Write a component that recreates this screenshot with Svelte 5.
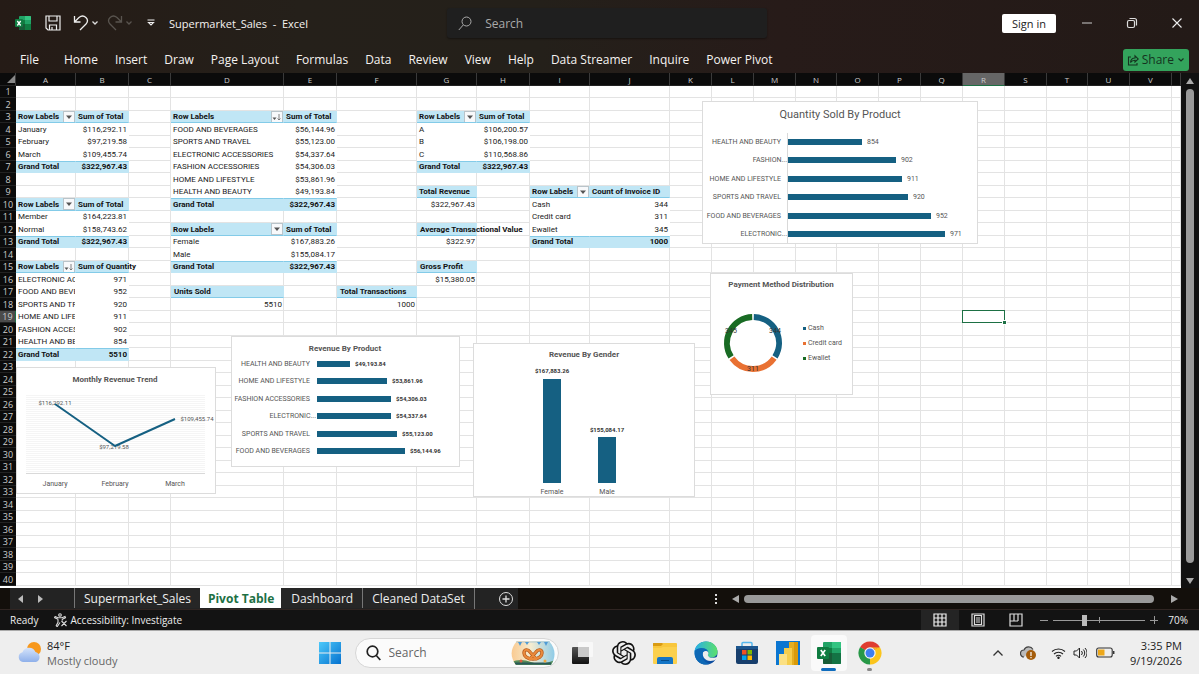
<script>
	const menus = ["File", "Home", "Insert", "Draw", "Page Layout", "Formulas", "Data", "Review", "View", "Help", "Data Streamer", "Inquire", "Power Pivot"];

	const columns = [
		["A", 60], ["B", 53], ["C", 42], ["D", 113], ["E", 53], ["F", 80],
		["G", 60], ["H", 53], ["I", 60], ["J", 80], ["K", 42], ["L", 42],
		["M", 42], ["N", 41], ["O", 42], ["P", 42], ["Q", 42], ["R", 42],
		["S", 42], ["T", 41], ["U", 42], ["V", 42], ["", null],
	];
	const rows = Array.from({ length: 40 }, (_, i) => i + 1);
	const sheets = ["Supermarket_Sales", "Pivot Table", "Dashboard", "Cleaned DataSet"];

	const pivots = [
		{ cols: "AB", row: 3, head: "Sum of Total", data: [["January", "$116,292.11"], ["February", "$97,219.58"], ["March", "$109,455.74"]], total: "$322,967.43" },
		{ cols: "AB", row: 10, head: "Sum of Total", data: [["Member", "$164,223.81"], ["Normal", "$158,743.62"]], total: "$322,967.43" },
		{ cols: "AB", row: 15, head: "Sum of Quantity", sorted: true, data: [["ELECTRONIC ACCESSORIES", "971"], ["FOOD AND BEVERAGES", "952"], ["SPORTS AND TRAVEL", "920"], ["HOME AND LIFESTYLE", "911"], ["FASHION ACCESSORIES", "902"], ["HEALTH AND BEAUTY", "854"]], total: "5510" },
		{ cols: "DE", row: 3, head: "Sum of Total", sorted: true, data: [["FOOD AND BEVERAGES", "$56,144.96"], ["SPORTS AND TRAVEL", "$55,123.00"], ["ELECTRONIC ACCESSORIES", "$54,337.64"], ["FASHION ACCESSORIES", "$54,306.03"], ["HOME AND LIFESTYLE", "$53,861.96"], ["HEALTH AND BEAUTY", "$49,193.84"]], total: "$322,967.43" },
		{ cols: "DE", row: 12, head: "Sum of Total", data: [["Female", "$167,883.26"], ["Male", "$155,084.17"]], total: "$322,967.43" },
		{ cols: "GH", row: 3, head: "Sum of Total", data: [["A", "$106,200.57"], ["B", "$106,198.00"], ["C", "$110,568.86"]], total: "$322,967.43" },
		{ cols: "IJ", row: 9, head: "Count of Invoice ID", data: [["Cash", "344"], ["Credit card", "311"], ["Ewallet", "345"]], total: "1000" },
	];

	const cells = {};
	for (const p of pivots) {
		const [l, r] = p.cols;
		const end = p.row + p.data.length + 1;
		cells[l + p.row] = { text: "Row Labels", cls: "head", filter: p.sorted ? "sort" : "drop" };
		cells[r + p.row] = { text: p.head, cls: "head spill" };
		p.data.forEach(([name, value], i) => {
			cells[l + (p.row + 1 + i)] = { text: name, cls: "plain" };
			cells[r + (p.row + 1 + i)] = { text: value, cls: "plain num" };
		});
		cells[l + end] = { text: "Grand Total", cls: "total" };
		cells[r + end] = { text: p.total, cls: "total num" };
	}

	cells.G9 = { text: "Total Revenue", cls: "head" };
	cells.G10 = { text: "$322,967.43", cls: "num" };
	cells.G12 = { text: "Average Transactional Value", cls: "head indent spill" };
	cells.G13 = { text: "$322.97", cls: "num" };
	cells.G15 = { text: "Gross Profit", cls: "head indent" };
	cells.G16 = { text: "$15,380.05", cls: "num" };
	cells.D17 = { text: "Units Sold", cls: "head indent" };
	cells.D18 = { text: "5510", cls: "num" };
	cells.F17 = { text: "Total Transactions", cls: "head indent" };
	cells.F18 = { text: "1000", cls: "num" };

	const quantity = [
		["HEALTH AND BEAUTY", 74, "854"],
		["FASHION...", 108, "902"],
		["HOME AND LIFESTYLE", 114, "911"],
		["SPORTS AND TRAVEL", 120, "920"],
		["FOOD AND BEVERAGES", 143, "952"],
		["ELECTRONIC...", 157, "971"],
	];
	const revenue = [
		["HEALTH AND BEAUTY", 33, "$49,193.84"],
		["HOME AND LIFESTYLE", 70, "$53,861.96"],
		["FASHION ACCESSORIES", 74, "$54,306.03"],
		["ELECTRONIC...", 74, "$54,337.64"],
		["SPORTS AND TRAVEL", 80, "$55,123.00"],
		["FOOD AND BEVERAGES", 88, "$56,144.96"],
	];
	const payments = [
		{ name: "Cash", value: 344, color: "#156082", x: 65, y: 58 },
		{ name: "Credit card", value: 311, color: "#e97132", x: 43, y: 96 },
		{ name: "Ewallet", value: 345, color: "#196b24", x: 21, y: 58 },
	];

	function arc(index) {
		const before = payments.slice(0, index).reduce((s, p) => s + p.value, 0);
		const a = (before / 1000) * Math.PI * 2 + 0.03;
		const b = ((before + payments[index].value) / 1000) * Math.PI * 2 - 0.03;
		const at = (t) => `${43 + 26 * Math.sin(t)} ${70 - 26 * Math.cos(t)}`;
		return `M${at(a)}A26 26 0 0 1 ${at(b)}`;
	}

	let active = "Pivot Table";
	let zoom = 70;
</script>

<div class="window">
	<header>
		<div class="titlebar">
			<div class="quick">
				<svg class="logo" width="16" height="16" viewBox="0 0 16 16">
					<rect x="4" y="1" width="12" height="14" rx="1" fill="#21a366" />
					<path d="M4 8h6v7H5a1 1 0 0 1-1-1z" fill="#185c37" />
					<path d="M4 5h6v4H4zM10 9h6v5a1 1 0 0 1-1 1h-5z" fill="#107c41" />
					<path d="M10 1h5a1 1 0 0 1 1 1v3h-6z" fill="#33c481" />
					<rect y="4" width="8" height="8" rx="1" fill="#107c41" />
					<path d="M2.3 6l3.4 4.5M5.7 6L2.3 10.5" stroke="#fff" stroke-width="1.3" />
				</svg>
				<button class="save" aria-label="Save">
					<svg width="16" height="16" viewBox="0 0 16 16" fill="none" stroke="#eee" stroke-width="1.2">
						<path d="M1 1h14v14H3l-2-2zM4 1v5h8V1M4.500 15v-5h7v5M7 12v3" />
					</svg>
				</button>
				<button class="undo" aria-label="Undo">
					<svg width="16" height="18" viewBox="0 0 16 18" fill="none" stroke="#eee" stroke-width="1.3">
						<path d="M1.500 2v6h6M1.500 8L6 3.500c5-4 11 2 7 6.500l-6 6" />
					</svg>
				</button>
				<svg width="8" height="6" viewBox="0 0 8 6" fill="none" stroke="#ddd" stroke-width="1.3"><path d="M1.500 1.500L4 4l2.500-2.500" /></svg>
				<button class="redo" aria-label="Redo">
					<svg width="16" height="18" viewBox="0 0 16 18" fill="none" stroke="#59544f" stroke-width="1.3">
						<path d="M14.500 2v6h-6M14.500 8L10 3.500c-5-4-11 2-7 6.500l6 6" />
					</svg>
				</button>
				<svg width="8" height="6" viewBox="0 0 8 6" fill="none" stroke="#59544f" stroke-width="1.3"><path d="M1.500 1.500L4 4l2.500-2.500" /></svg>
				<button class="custom" aria-label="Customize toolbar">
					<svg width="8" height="8" viewBox="0 0 8 8" fill="none" stroke="#eee" stroke-width="1.1"><path d="M.5 1h7M1.500 3.500h5L4 6z" /></svg>
				</button>
				<span class="doc">Supermarket_Sales&nbsp; -&nbsp; Excel</span>
			</div>
			<label class="search">
				<svg width="14" height="15" viewBox="0 0 14 15" fill="none" stroke="#aaa"><circle cx="8.500" cy="5.500" r="4.500" /><path d="M5.200 9L.8 14" /></svg>
				<input type="text" placeholder="Search" aria-label="Search" />
			</label>
			<div class="controls">
				<button class="signin">Sign in</button>
				<button class="win" aria-label="Minimize"><svg width="12" height="12" viewBox="0 0 12 12" stroke="#ccc"><path d="M1 6h10" /></svg></button>
				<button class="win" aria-label="Restore">
					<svg width="12" height="12" viewBox="0 0 12 12" fill="none" stroke="#ddd" stroke-width="1.2"><rect x="1.500" y="3.500" width="7" height="7" rx="1.500" /><path d="M3.500 1.500h5a2 2 0 0 1 2 2v5" /></svg>
				</button>
				<button class="win" aria-label="Close"><svg width="12" height="12" viewBox="0 0 12 12" stroke="#eee" stroke-width="1.1"><path d="M1.500 1.500l9 9M10.500 1.500l-9 9" /></svg></button>
			</div>
		</div>
		<nav class="ribbon">
			{#each menus as menu}
				<button>{menu}</button>
			{/each}
			<button class="share">
				<svg width="12" height="12" viewBox="0 0 12 12" fill="none" stroke="#14331f" stroke-width="1.1"><path d="M4 3H1.500v8h8.500V9M3.500 8.500c.3-3 2-4.500 4.500-4.500V1.800L11.300 5 8 8V6.200c-2 0-3.400.6-4.500 2.300z" /></svg>
				Share
				<svg width="8" height="6" viewBox="0 0 8 6" fill="none" stroke="#14331f" stroke-width="1.2"><path d="M1.500 1.500L4 4l2.500-2.500" /></svg>
			</button>
		</nav>
	</header>

	<main>
		<div class="sheet">
			<table>
				<colgroup>
					<col class="rowhead" />
					{#each columns as [, width]}
						<col style={width ? `width:${width}px` : ""} />
					{/each}
				</colgroup>
				<thead>
					<tr>
						<th class="corner"><svg width="8" height="8" viewBox="0 0 8 8"><path d="M8 0v8H0z" fill="#888" /></svg></th>
						{#each columns as [name]}
							<th class:current={name === "R"}>{name}</th>
						{/each}
					</tr>
				</thead>
				<tbody>
					{#each rows as row}
						<tr>
							<th class:current={row === 19}>{row}</th>
							{#each columns as [name]}
								{@const cell = cells[name + row]}
								{#if cell}
									<td class={cell.cls}>
										{cell.text}
										{#if cell.filter}
											<button class="filter" aria-label="Filter">
												<svg width="10" height="10" viewBox="0 0 10 10">
													{#if cell.filter === "drop"}
														<path d="M2 3.500h6L5 7z" fill="#555" />
													{:else}
														<path d="M.5 5.500h4l-2 2.500z" fill="#555" />
														<path d="M7 2v6M5.500 6.500L7 8l1.500-1.500" fill="none" stroke="#666" stroke-width=".8" />
													{/if}
												</svg>
											</button>
										{/if}
									</td>
								{:else if name === "R" && row === 19}
									<td class="spill"><span class="selection"></span></td>
								{:else}
									<td></td>
								{/if}
							{/each}
						</tr>
					{/each}
				</tbody>
			</table>

			<svg class="chart monthly" width="200" height="127">
				<text class="title" x="99" y="13">Monthly Revenue Trend</text>
				{#each Array(39) as _, i}
					<path d="M10 {28.5 + i * 2}h179" stroke="#f5f5f5" />
				{/each}
				<path d="M10 106.500h179" stroke="#d9d9d9" />
				<g class="small mid">
					<text x="39" y="36">$116,292.11</text>
					<text x="98" y="80">$97,219.58</text>
					<text x="181" y="52">$109,455.74</text>
				</g>
				<path d="M39 37L99 79 159 52" fill="none" stroke="#156082" stroke-width="2" stroke-linejoin="round" />
				<g class="axis mid">
					<text x="39" y="117">January</text>
					<text x="99" y="117">February</text>
					<text x="159" y="117">March</text>
				</g>
			</svg>

			<svg class="chart revenue" width="229" height="131">
				<text class="title" x="114" y="13">Revenue By Product</text>
				{#each revenue as [name, width, value], i}
					{@const y = 28 + Math.round(i * 17.4)}
					<text class="cat" x={name.endsWith("...") ? 85 : 79} {y}>{name}</text>
					<rect x="86" y={y - 3} {width} height="6" fill="#156082" />
					<text class="small strong" x={width + 91} {y}>{value}</text>
				{/each}
			</svg>

			<svg class="chart gender" width="222" height="154">
				<text class="title" x="111" y="12">Revenue By Gender</text>
				<rect x="70" y="36" width="18" height="104" fill="#156082" />
				<rect x="125" y="94" width="18" height="46" fill="#156082" />
				<g class="values mid">
					<text x="79" y="28">$167,883.26</text>
					<text x="134" y="87">$155,084.17</text>
				</g>
				<g class="axis mid">
					<text x="79" y="149">Female</text>
					<text x="134" y="149">Male</text>
				</g>
			</svg>

			<svg class="chart quantity" width="276" height="143">
				<text class="title large" x="138" y="14">Quantity Sold By Product</text>
				<path d="M85.500 32v110" stroke="#d9d9d9" />
				{#each quantity as [name, width, value], i}
					{@const y = 41 + Math.round(i * 18.4)}
					<text class="cat" x={name.endsWith("...") ? 85 : 79} {y}>{name}</text>
					<rect x="86" y={y - 3} {width} height="6" fill="#156082" />
					<text class="axis" x={width + 91} {y}>{value}</text>
				{/each}
			</svg>

			<svg class="chart payment" width="143" height="122">
				<text class="title" x="71" y="12">Payment Method Distribution</text>
				{#each payments as p, i}
					<path d={arc(i)} fill="none" stroke={p.color} stroke-width="6" />
					<text class="axis mid dark" x={p.x} y={p.y}>{p.value}</text>
					<rect x="93" y={54 + i * 15} width="3" height="3" fill={p.color} />
					<text class="axis" x="98" y={55 + i * 15}>{p.name}</text>
				{/each}
			</svg>
		</div>
		<div class="vscroll">
			<svg width="8" height="8" viewBox="0 0 8 8"><path d="M4 1l4 6H0z" fill="#aaa" /></svg>
			<div class="thumb"></div>
			<svg width="8" height="8" viewBox="0 0 8 8"><path d="M4 7l4-6H0z" fill="#aaa" /></svg>
		</div>
	</main>

	<div class="tabs">
		<div class="tray">
			<div class="arrows">
				<button aria-label="Previous sheet"><svg width="5" height="8" viewBox="0 0 5 8"><path d="M5 0v8L0 4z" fill="#bbb" /></svg></button>
				<button aria-label="Next sheet"><svg width="5" height="8" viewBox="0 0 5 8"><path d="M0 0v8l5-4z" fill="#bbb" /></svg></button>
			</div>
			{#each sheets as sheet}
				<button class="tab" class:active={sheet === active} on:click={() => (active = sheet)}>{sheet}</button>
			{/each}
			<button class="add" aria-label="New sheet">
				<svg width="16" height="16" viewBox="0 0 16 16" fill="none" stroke="#ddd"><circle cx="8" cy="8" r="6.500" /><path d="M8 4.500v7M4.500 8h7" stroke-width="1.300" /></svg>
			</button>
		</div>
		<div class="hscroll">
			<svg width="4" height="12" viewBox="0 0 4 12" fill="#ddd"><path d="M1 1h2v2H1zM1 5h2v2H1zM1 9h2v2H1z" /></svg>
			<svg class="left" width="7" height="8" viewBox="0 0 7 8"><path d="M7 0v8L0 4z" fill="#aaa" /></svg>
			<div class="thumb"></div>
			<svg width="7" height="8" viewBox="0 0 7 8"><path d="M0 0v8l7-4z" fill="#aaa" /></svg>
		</div>
	</div>

	<div class="status">
		<span>Ready</span>
		<button class="access">
			<svg width="14" height="14" viewBox="0 0 14 14" fill="none" stroke="#ddd" stroke-width="1.1"><circle cx="6" cy="2" r="1.300" /><path d="M1 3.500l3 1.300h4l3-1.300.5 1.200L8.300 6.300v1.200M4 6.300v3L2 13M1 3.500L.6 4.700 4 6.300M2 13l1.300.5L6 9.500M7.500 8l5 5M12.500 8l-5 5" /></svg>
			Accessibility: Investigate
		</button>
		<div class="views">
			<button class="view on" aria-label="Normal view">
				<svg width="14" height="14" viewBox="0 0 14 14" fill="none" stroke="#eee" stroke-width="1.2"><path d="M1 1h12v12H1zM1 5h12M1 9h12M5 1v12M9 1v12" /></svg>
			</button>
			<button class="view" aria-label="Page layout view">
				<svg width="14" height="14" viewBox="0 0 14 14" fill="none" stroke="#ddd" stroke-width="1.2"><path d="M1 1h12v12H1zM3.500 2.500h7v9h-7zM5 5h4M5 7h4M5 9h4" /></svg>
			</button>
			<button class="view" aria-label="Page break preview">
				<svg width="14" height="14" viewBox="0 0 14 14" fill="none" stroke="#ddd" stroke-width="1.2"><path d="M1 1h12v12H1zM5 1v7M9 1v7M1 8h8" /></svg>
			</button>
			<button class="step" aria-label="Zoom out"><svg width="8" height="8" viewBox="0 0 8 8" stroke="#999"><path d="M0 4.500h8" /></svg></button>
			<input type="range" min="10" max="190" bind:value={zoom} aria-label="Zoom" />
			<button class="step" aria-label="Zoom in"><svg width="8" height="8" viewBox="0 0 8 8" stroke="#999"><path d="M0 4.500h8M4.500 0v8" /></svg></button>
			<output>{zoom}%</output>
		</div>
	</div>

	<footer>
		<button class="weather">
			<svg width="26" height="24" viewBox="0 0 26 24">
				<defs><linearGradient id="cloud" x2="0" y2="1"><stop stop-color="#d5e4fb" /><stop offset="1" stop-color="#8fb0ea" /></linearGradient></defs>
				<circle cx="17" cy="8" r="7" fill="#f7981d" />
				<path d="M6 21a5 5 0 0 1-.5-9.800A7 7 0 0 1 18.500 11 5.200 5.200 0 0 1 19 21z" fill="url(#cloud)" />
			</svg>
			<span><b>84°F</b><small>Mostly cloudy</small></span>
		</button>
		<div class="apps">
			<button aria-label="Start">
				<svg width="24" height="24" viewBox="0 0 24 24">
					<defs><linearGradient id="win" x2="1" y2="1"><stop stop-color="#4cc9fa" /><stop offset="1" stop-color="#0571cf" /></linearGradient></defs>
					<path d="M1 1h10.500v10.500H1zM12.500 1H23v10.500H12.500zM1 12.500h10.500V23H1zM12.500 12.500H23V23H12.500z" fill="url(#win)" />
				</svg>
			</button>
			<label class="find">
				<svg width="15" height="16" viewBox="0 0 15 16" fill="none" stroke="#222" stroke-width="1.700"><circle cx="6.500" cy="6.500" r="5.300" /><path d="M10.300 10.500l4 4.500" /></svg>
				<input type="text" placeholder="Search" aria-label="Search Windows" />
				<svg width="44" height="24" viewBox="0 0 44 24">
					<defs><linearGradient id="sky"><stop stop-color="#fac98f" /><stop offset=".45" stop-color="#f5ecd0" /><stop offset="1" stop-color="#8dcbe8" /></linearGradient><clipPath id="oval"><path d="M6 0h32c7 8 7 16 2 24H5C-1 16-1 8 6 0z" /></clipPath></defs>
					<g clip-path="url(#oval)">
						<path d="M0 0h44v24H0z" fill="url(#sky)" />
						<path d="M0 21q10-4 20 0t24-2v6H0z" fill="#568b58" />
						<path d="M4 22.500h36" stroke="#295957" stroke-width="2" />
						<circle cx="10" cy="20" r="1.500" fill="#dc5a3d" /><circle cx="34" cy="20" r="1.500" fill="#efa83f" />
					</g>
					<path d="M5 1h34" stroke="#b1cad5" />
					<path d="M7 1h4l-2 4zM14 1h4l-2 3zM26 1h4l-2 3zM33 1h4l-2 4z" fill="#4f9bd6" />
					<g fill="none">
						<path d="M18 19l7-8c2-3 6-3 6 1 0 3-3 6-9 6s-9-3-9-6c0-4 4-4 6-1l7 8" stroke="#b2581c" stroke-width="3.400" />
						<path d="M18 19l7-8c2-3 6-3 6 1 0 3-3 6-9 6s-9-3-9-6c0-4 4-4 6-1l7 8" stroke="#ea8a3c" stroke-width="2" />
					</g>
				</svg>
			</label>
			<button aria-label="Task view">
				<svg width="24" height="24" viewBox="0 0 24 24">
					<defs><linearGradient id="tv" x2="0" y2="1"><stop stop-color="#555" /><stop offset="1" stop-color="#111" /></linearGradient></defs>
					<rect x="1" y="6" width="17" height="17" rx="1" fill="url(#tv)" />
					<rect x="7" y="1" width="15" height="15" rx="1" fill="#f8f8f8" />
					<path d="M7 6h11v10H7z" fill="#c9c9c9" />
				</svg>
			</button>
			<button aria-label="ChatGPT">
				<svg width="24" height="24" viewBox="0 0 24 24" fill="#111">
					<path d="M22.280 9.820a5.980 5.980 0 0 0-.52-4.910 6.050 6.050 0 0 0-6.510-2.900A6.070 6.070 0 0 0 4.980 4.180a5.980 5.980 0 0 0-4 2.900 6.050 6.050 0 0 0 .74 7.100 5.980 5.980 0 0 0 .51 4.910 6.050 6.050 0 0 0 6.510 2.900A5.980 5.980 0 0 0 13.260 24a6.060 6.060 0 0 0 5.770-4.210 5.990 5.990 0 0 0 4-2.900 6.060 6.060 0 0 0-.75-7.070zm-9.020 12.610a4.480 4.480 0 0 1-2.880-1.040l.14-.08 4.780-2.760a.8.8 0 0 0 .39-.68v-6.740l2.020 1.170a.07.07 0 0 1 .04.05v5.580a4.500 4.500 0 0 1-4.490 4.500zM3.600 18.300a4.470 4.470 0 0 1-.53-3.010l.14.090 4.780 2.760a.77.77 0 0 0 .78 0l5.840-3.370v2.330a.08.08 0 0 1-.03.06L9.740 19.950A4.500 4.500 0 0 1 3.600 18.300zM2.340 7.900a4.490 4.490 0 0 1 2.370-1.970v5.680a.77.77 0 0 0 .39.68l5.810 3.350-2.020 1.170a.08.08 0 0 1-.07 0l-4.830-2.790A4.500 4.500 0 0 1 2.340 7.870zm16.600 3.860L13.100 8.360 15.120 7.200a.08.08 0 0 1 .07 0l4.830 2.790a4.490 4.490 0 0 1-.68 8.100v-5.680a.79.79 0 0 0-.4-.65zm2.010-3.020l-.14-.09-4.770-2.780a.78.78 0 0 0-.79 0L9.410 9.230V6.900a.07.07 0 0 1 .03-.06l4.830-2.790a4.500 4.500 0 0 1 6.680 4.660zM8.310 12.860l-2.020-1.160a.08.08 0 0 1-.04-.06V6.070a4.500 4.500 0 0 1 7.380-3.450l-.14.08-4.780 2.760a.8.8 0 0 0-.39.68zM9.400 10.500l2.610-1.500 2.610 1.500v3L12 15l-2.600-1.500z" />
				</svg>
			</button>
			<button aria-label="File Explorer">
				<svg width="24" height="24" viewBox="0 0 24 24">
					<path d="M0 3a1 1 0 0 1 1-1h8l2 3H0z" fill="#d99b13" /><rect y="4" width="24" height="19" rx="1" fill="#fbd04d" /><path d="M0 3h8l2-1h13a1 1 0 0 1 1 1v3H10L8 7H0z" fill="#f8c63c" /><path d="M0 3a1 1 0 0 1 1-1h8l1 1-2 2H0z" fill="#d99b13" />
					<path d="M4 23v-5a2 2 0 0 1 2-2h12a2 2 0 0 1 2 2v5z" fill="#1475c6" /><path d="M8 19.500h8" stroke="#064d8c" />
				</svg>
			</button>
			<button aria-label="Edge">
				<svg width="24" height="24" viewBox="0 0 24 24">
					<defs><linearGradient id="ea"><stop stop-color="#2aaee8" /><stop offset="1" stop-color="#5be06b" /></linearGradient><linearGradient id="eb" x2="1" y2="1"><stop stop-color="#0883d8" /><stop offset="1" stop-color="#0b3f91" /></linearGradient></defs>
					<circle cx="12" cy="12" r="11.500" fill="url(#eb)" />
					<path d="M.5 11C1 4.500 6 .5 12 .5c7 0 11.500 5 11.500 10 0 4-3 6-6.500 6-3 0-4-1.200-3.500-2 2-3 .5-7-4-7C5.500 7.500 2 9 .5 11z" fill="url(#ea)" />
					<path d="M9 11.500c-1 4 2 8.500 7.500 8.500 2.500 0 4.500-1 6-2l.8-2c-2 .8-9 2-9.500-2 1-1 1-3-.8-4-1.500-.8-3.500 0-4 1.500z" fill="#ededed" />
					<path d="M1 9.500c3-3.500 11-3.500 12.500 1-3-1.500-6 .5-5.500 4.500.4 4 3.500 7 8 7.500C8 26-1 19 1 9.500z" fill="#0d68b5" />
				</svg>
			</button>
			<button aria-label="Microsoft Store">
				<svg width="24" height="24" viewBox="0 0 24 24">
					<path d="M7 7V2.500A1 1 0 0 1 8 1.500h8a1 1 0 0 1 1 1V7" fill="none" stroke="#55b7ed" stroke-width="1.500" />
					<path d="M1 5h22v16a2 2 0 0 1-2 2H3a2 2 0 0 1-2-2z" fill="#173e6c" /><path d="M1 5h22v3H1z" fill="#1c568e" />
					<path d="M7 9h4.500v4.500H7z" fill="#f25022" /><path d="M12.500 9H17v4.500h-4.500z" fill="#7fba00" /><path d="M7 14.500h4.500V19H7z" fill="#00a4ef" /><path d="M12.500 14.500H17V19h-4.500z" fill="#ffb900" />
				</svg>
			</button>
			<button aria-label="Power BI">
				<svg width="24" height="24" viewBox="0 0 24 24">
					<path d="M0 0h24v24H0z" fill="#0b76d1" /><path d="M13 1h9v23h-9z" fill="#d99a0a" /><path d="M13 1h5v23h-5z" fill="#e5ae21" /><path d="M8 7h8v17H8z" fill="#f5cd4c" /><path d="M3 13h8v11H3z" fill="#fbe083" />
				</svg>
			</button>
			<button class="running" aria-label="Excel">
				<svg width="24" height="24" viewBox="0 0 24 24">
					<rect x="6" y="1" width="18" height="22" rx="1" fill="#21a366" /><path d="M6 12h9v11H7a1 1 0 0 1-1-1z" fill="#185c37" /><path d="M6 7h9v5H6z" fill="#107c41" /><path d="M15 1h8a1 1 0 0 1 1 1v5h-9z" fill="#33c481" /><path d="M15 12h9v10a1 1 0 0 1-1 1h-8z" fill="#147344" /><rect y="6" width="12" height="12" rx="1" fill="#107c41" /><path d="M3.800 9l4.400 6M8.200 9l-4.400 6" stroke="#fff" stroke-width="1.700" />
				</svg>
			</button>
			<button class="idle" aria-label="Chrome">
				<svg width="24" height="24" viewBox="0 0 24 24">
					<path d="M12 12L2.040 6.250A11.500 11.500 0 0 1 21.960 6.250z" fill="#df3c30" /><path d="M12 12L21.960 6.250A11.500 11.500 0 0 1 12 23.500z" fill="#fbc51d" /><path d="M12 12v11.500A11.500 11.500 0 0 1 2.040 6.250z" fill="#279847" />
					<path d="M2.040 6.250L7.500 15l4.500-3z" fill="#279847" /><path d="M12 6.500h10.100L17 8z" fill="#fbc51d" /><path d="M17 8l5.100-1.500L17.500 13z" fill="#fbc51d" /><path d="M12 23.500L16.700 15 12 16z" fill="#fbc51d" />
					<circle cx="12" cy="12" r="5.700" fill="#f7f7f7" /><circle cx="12" cy="12" r="4.500" fill="#3f7ff0" />
				</svg>
			</button>
		</div>
		<div class="system">
			<svg width="12" height="8" viewBox="0 0 12 8" fill="none" stroke="#333" stroke-width="1.300"><path d="M1.500 6.500L6 2l4.500 4.500" /></svg>
			<svg class="cloud" width="17" height="16" viewBox="0 0 17 16">
				<path d="M4 12a3.500 3.500 0 0 1 0-7 5 5 0 0 1 9-.5" fill="#bbb" stroke="#444" stroke-width="1.200" /><circle cx="11" cy="10" r="5" fill="#a55d0b" /><path d="M11 7v4M11 12v1.200" stroke="#fff" stroke-width="1.200" />
			</svg>
			<svg class="wifi" width="15" height="12" viewBox="0 0 15 12" fill="none" stroke="#222" stroke-width="1.100"><path d="M1 4.500a9.500 9.500 0 0 1 13 0M3 7a6.500 6.500 0 0 1 9 0M5 9.300a3.500 3.500 0 0 1 5 0" /><circle cx="7.500" cy="10.800" r=".7" fill="#222" /></svg>
			<svg width="14" height="12" viewBox="0 0 14 12" fill="none" stroke="#222"><path d="M1 4h2.500l3-3v10l-3-3H1zM8.500 4a3 3 0 0 1 0 4M10.300 2.500a5 5 0 0 1 0 7M12 1a7 7 0 0 1 0 10" /></svg>
			<svg class="battery" width="19" height="12" viewBox="0 0 19 12"><rect x=".7" y="1" width="15.500" height="9" rx="2" fill="none" stroke="#333" stroke-width="1.100" /><path d="M2 2.500h6.500v6H2z" fill="#eda81b" /><path d="M17.700 4v3" stroke="#333" stroke-width="1.500" /></svg>
			<time>3:35 PM<br />9/19/2026</time>
		</div>
	</footer>
</div>

<style>
	:global(body) {
		margin: 0;
		font-family: "Open Sans", "Noto Sans", sans-serif;
		overflow: hidden;
	}

	.window {
		display: flex;
		flex-direction: column;
		height: 100vh;
		background: #111;
	}

	button,
	input {
		margin: 0;
		padding: 0;
		border: none;
		background: none;
		color: inherit;
		font: inherit;
	}

	svg {
		flex: none;
	}

	header {
		flex: none;
		color: #f5f2f0;
		font-size: 12px;
		background: linear-gradient(90deg, #251b16, #25201a 25%, #24201a 45%, #271b19 65%, #231a17);
	}

	.titlebar {
		display: grid;
		grid-template-columns: 1fr 27% 1fr;
		align-items: center;
		height: 46px;
		padding-left: 15px;
	}

	.quick {
		display: flex;
		align-items: center;
		font-size: 11px;
		white-space: nowrap;
	}

	.quick button {
		display: flex;
	}

	.save {
		margin: 0 12px 0 14px;
	}

	.undo {
		margin-right: 2px;
	}

	.redo {
		margin: 0 2px 0 8px;
	}

	.custom {
		margin: 0 14px;
	}

	.search {
		display: flex;
		align-items: center;
		gap: 13px;
		height: 30px;
		padding-left: 11px;
		border-radius: 3px;
		background: #1f1f1f;
		box-shadow: 0 1px 2px #0006;
	}

	.search input {
		flex: 1;
		min-width: 0;
	}

	.search input::placeholder {
		color: #aaa;
		opacity: 1;
	}

	.controls {
		display: flex;
		justify-content: flex-end;
		align-items: center;
	}

	.signin {
		width: 54px;
		height: 19px;
		margin-right: 8px;
		border-radius: 2px;
		background: #fff;
		color: #222;
		font-size: 11px;
	}

	.win {
		display: flex;
		justify-content: center;
		width: 45px;
	}

	.ribbon {
		display: flex;
		align-items: center;
		gap: 17px;
		height: 27px;
		padding: 0 10px 0 20px;
		white-space: nowrap;
	}

	.ribbon button:first-child {
		margin-right: 8px;
	}

	.share {
		display: flex;
		align-items: center;
		gap: 3px;
		height: 22px;
		margin-left: auto;
		padding: 0 4px;
		border-radius: 3px;
		background: #33a35c;
		color: #14331f;
	}

	main {
		display: flex;
		flex: 1;
		min-height: 0;
	}

	.sheet {
		position: relative;
		flex: 1;
		min-width: 0;
		overflow: hidden;
		background: #fff;
		font-family: Roboto, "Liberation Sans", sans-serif;
		color: #222;
	}

	table {
		width: 100%;
		table-layout: fixed;
		border-spacing: 0;
		font-size: 8px;
		line-height: 11px;
	}

	.rowhead {
		width: 16px;
	}

	th,
	td {
		box-sizing: border-box;
		height: 12px;
		padding: 0;
	}

	tr:nth-child(even) > * {
		height: 13px;
	}

	th {
		background: #0b0b0b;
		border-bottom: 1px solid #222;
		color: #ccc;
		font-family: "Open Sans", sans-serif;
		font-weight: normal;
	}

	thead th {
		height: 13px;
		border-right: 1px solid #3a3a3a;
	}

	thead th.current {
		background: #666;
		border-bottom: 1px solid #1d7044;
	}

	tbody th {
		font-size: 9px;
	}

	tbody th.current {
		background: #4b4b4b;
		border-right: 1px solid #1d7044;
	}

	.corner {
		text-align: right;
	}

	.corner svg {
		display: block;
		margin-left: auto;
	}

	td {
		position: relative;
		padding: 0 2px;
		border-right: 1px solid #e3e3e3;
		border-bottom: 1px solid #e3e3e3;
		overflow: hidden;
		white-space: nowrap;
	}

	td.plain {
		border-color: #fff;
	}

	td.num {
		text-align: right;
		padding-right: 1px;
	}

	td.head,
	td.total {
		background: #c0e6f5;
		border-color: #c0e6f5;
		color: #111;
		font-weight: bold;
	}

	td.head {
		border-bottom-color: #83cbe8;
	}

	td.total {
		border-top: 1px solid #83cbe8;
		line-height: 10px;
	}

	td.indent {
		padding-left: 3px;
	}

	td.spill {
		overflow: visible;
		z-index: 1;
	}

	.filter {
		position: absolute;
		top: 0;
		right: 0;
		display: flex;
		align-items: center;
		justify-content: center;
		width: 12px;
		height: 12px;
		border: 1px solid #b9c4ca;
		background: #f8f9fb;
	}

	.selection {
		position: absolute;
		inset: -1px;
		border: 1px solid #1d7044;
	}

	.selection::after {
		content: "";
		position: absolute;
		right: -3px;
		bottom: -3px;
		width: 3px;
		height: 3px;
		border: 1px solid #fff;
		background: #1d7044;
	}

	.chart {
		position: absolute;
		z-index: 2;
		outline: 1px solid #dcdcdc;
		outline-offset: -1px;
		background: #fff;
		font-size: 8px;
		fill: #555;
	}

	.chart text {
		dominant-baseline: middle;
	}

	.monthly {
		left: 16px;
		top: 294px;
	}

	.revenue {
		left: 231px;
		top: 263px;
	}

	.gender {
		left: 473px;
		top: 270px;
	}

	.quantity {
		left: 702px;
		top: 28px;
	}

	.payment {
		left: 710px;
		top: 200px;
	}

	.chart .title {
		font-weight: bold;
		text-anchor: middle;
	}

	.chart .large {
		font-size: 11px;
		font-weight: normal;
	}

	.cat {
		font-size: 7px;
		text-anchor: end;
	}

	.small,
	.values {
		font-size: 6px;
	}

	.strong,
	.values {
		font-weight: bold;
		fill: #333;
	}

	.mid {
		text-anchor: middle;
	}

	.axis {
		font-size: 7px;
	}

	.dark {
		fill: #333;
	}

	.vscroll {
		display: flex;
		flex-direction: column;
		align-items: center;
		gap: 4px;
		width: 18px;
		padding: 4px 0 3px;
		box-sizing: border-box;
		background: #111;
	}

	.vscroll .thumb {
		flex: 1;
		width: 8px;
		margin-bottom: 10px;
		border-radius: 4px;
		background: #999;
	}

	.tabs {
		display: flex;
		flex: none;
		height: 22px;
		box-sizing: border-box;
		padding-left: 10px;
		border-bottom: 1px solid #302522;
		background: #130f0b;
		color: #eee;
		font-size: 12px;
	}

	.tray {
		display: flex;
		background: #232323;
	}

	.tray button {
		display: flex;
		align-items: center;
	}

	.arrows {
		display: flex;
		gap: 15px;
		width: 56px;
		padding-left: 8px;
	}

	.tray .tab {
		height: 20px;
		padding: 0 9px;
		border-left: 1px solid #777;
		background: #262626;
		white-space: nowrap;
	}

	.tray .active {
		padding: 0 7px;
		border-color: #fff;
		background: #fff;
		color: #1d7044;
		font-weight: bold;
	}

	.tray .active + .tab {
		border-color: #262626;
	}

	.add {
		padding: 0 4px 0 23px;
		border-left: 1px solid #777;
	}

	.hscroll {
		display: flex;
		align-items: center;
		width: 39%;
		margin-left: auto;
		padding-right: 21px;
	}

	.left {
		margin: 0 5px 0 14px;
	}

	.hscroll .thumb {
		flex: 1;
		height: 8px;
		margin-right: 17px;
		border-radius: 4px;
		background: #999;
	}

	.status {
		display: flex;
		flex: none;
		align-items: center;
		height: 20px;
		padding-left: 10px;
		background: #131313;
		color: #eee;
		font-size: 10px;
	}

	.access {
		display: flex;
		align-items: center;
		gap: 2px;
		margin-left: 16px;
	}

	.views {
		display: flex;
		align-items: center;
		height: 100%;
		margin-left: auto;
		padding-right: 11px;
	}

	.view {
		display: flex;
		align-items: center;
		justify-content: center;
		width: 38px;
		height: 100%;
	}

	.view.on {
		background: #242424;
	}

	.step {
		display: flex;
		margin: 0 5px;
	}

	input[type="range"] {
		appearance: none;
		width: 92px;
		height: 12px;
		background: linear-gradient(#999, #999) 50% 50% / 1px 6px no-repeat, linear-gradient(#999, #999) 0 50% / 100% 1px no-repeat;
	}

	input[type="range"]::-webkit-slider-thumb {
		appearance: none;
		width: 5px;
		height: 11px;
		background: #bbb;
	}

	output {
		margin-left: 5px;
		text-align: right;
	}

	footer {
		display: grid;
		grid-template-columns: 1fr auto 1fr;
		align-items: center;
		flex: none;
		height: 44px;
		box-sizing: border-box;
		border-top: 1px solid #aaa;
		background: #eee;
		color: #222;
		font-size: 11px;
		line-height: 15px;
	}

	.weather {
		display: flex;
		align-items: center;
		gap: 4px;
		padding-left: 17px;
		text-align: left;
	}

	.weather b,
	.weather small {
		display: block;
		font-size: 11px;
		font-weight: normal;
	}

	.weather small {
		color: #666;
	}

	.apps {
		display: flex;
		align-items: center;
		gap: 5px;
	}

	.apps button {
		position: relative;
		display: flex;
		align-items: center;
		justify-content: center;
		width: 36px;
		height: 36px;
		border-radius: 4px;
	}

	.find {
		display: flex;
		align-items: center;
		width: 204px;
		height: 30px;
		box-sizing: border-box;
		margin: 0 1px 0 2px;
		padding: 0 3px 0 10px;
		border: 1px solid #d6d6d6;
		border-radius: 15px;
		background: #fbfbfb;
		font-size: 12px;
	}

	.find input {
		flex: 1;
		min-width: 0;
		padding-left: 8px;
	}

	.find input::placeholder {
		color: #666;
		opacity: 1;
	}

	.apps .running {
		background: #fafafa;
	}

	.running::after,
	.idle::after {
		content: "";
		position: absolute;
		bottom: 0;
		width: 15px;
		height: 3px;
		border-radius: 2px;
		background: #0f6cbd;
	}

	.idle::after {
		width: 5px;
		background: #888;
	}

	.system {
		display: flex;
		align-items: center;
		justify-content: flex-end;
		padding-right: 17px;
		text-align: right;
	}

	.cloud {
		margin: 0 14px 0 16px;
	}

	.wifi {
		margin-right: 7px;
	}

	.battery {
		margin: 0 15px 0 9px;
	}
</style>
